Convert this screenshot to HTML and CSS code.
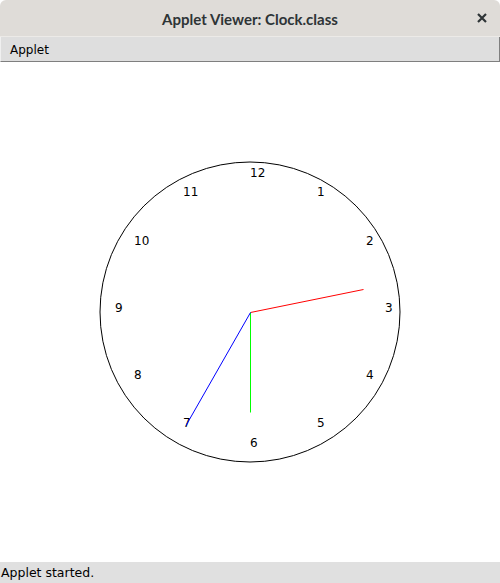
FILE: index.html
```html
<!DOCTYPE html>
<html>
<head>
<meta charset="utf-8">
<link rel="stylesheet" href="styles.css">
</head>
<body>
<div class="window">
  <div class="titlebar">
    <span class="title">Applet Viewer: Clock.class</span>
    <svg class="close" width="10" height="10" viewBox="0 0 10 10">
      <path d="M1 1 L9 9 M9 1 L1 9" stroke="#2e3436" stroke-width="2.2" fill="none"/>
    </svg>
  </div>
  <div class="menubar"><span class="menu">Applet</span></div>
  <div class="content">
    <svg class="clock" width="500" height="500" viewBox="0 0 500 500">
      <circle cx="250" cy="250" r="150" fill="none" stroke="#000" stroke-width="1"/>
      <g class="nums">
        <text x="250" y="115">12</text>
        <text x="317" y="133.5">1</text>
        <text x="366" y="183">2</text>
        <text x="385" y="249.5">3</text>
        <text x="366" y="317">4</text>
        <text x="317" y="365">5</text>
        <text x="250" y="384.5">6</text>
        <text x="183" y="365">7</text>
        <text x="134" y="317">8</text>
        <text x="115" y="249.5">9</text>
        <text x="134" y="183">10</text>
        <text x="183" y="133.5">11</text>
      </g>
      <line x1="250.5" y1="250.5" x2="363.5" y2="227.5" stroke="#ff0000" stroke-width="1"/>
      <line x1="250.5" y1="250.5" x2="250.5" y2="350.5" stroke="#00ff00" stroke-width="1"/>
      <line x1="250.5" y1="250.5" x2="186" y2="363.5" stroke="#0000ff" stroke-width="1"/>
    </svg>
  </div>
  <div class="status">Applet started.</div>
</div>
</body>
</html>
```
FILE: styles.css
```css
html, body {
  margin: 0;
  padding: 0;
  background: #ffffff;
}
.window {
  width: 500px;
  height: 583px;
  display: flex;
  flex-direction: column;
  overflow: hidden;
}
.titlebar {
  height: 36px;
  flex: none;
  background: #dfdcd8;
  border-bottom: 1px solid #eceae7;
  border-radius: 6px 6px 0 0;
  display: flex;
  align-items: center;
  justify-content: center;
  position: relative;
}
.title {
  font-family: "Lato", "DejaVu Sans", sans-serif;
  font-weight: bold;
  font-size: 15px;
  color: #2e3436;
  margin-top: 1px;
}
.close {
  position: absolute;
  right: 13px;
  top: 13px;
}
.menubar {
  height: 24px;
  flex: none;
  background: #dedede;
  border-bottom: 1px solid #7f7f7f;
  border-right: 1px solid #7f7f7f;
  border-left: 1px solid #f0f0f0;
  display: flex;
  align-items: center;
}
.menu {
  font-family: "DejaVu Sans", sans-serif;
  font-size: 12px;
  color: #000;
  padding-left: 9px;
  margin-top: 1px;
}
.content {
  flex: 1;
  background: #ffffff;
  position: relative;
}
.clock {
  display: block;
}
.nums text {
  font-family: "DejaVu Sans", sans-serif;
  font-size: 12px;
  fill: #000;
}
.status {
  height: 21px;
  flex: none;
  background: #e0e0e0;
  font-family: "DejaVu Sans", sans-serif;
  font-size: 12.5px;
  color: #000;
  line-height: 21px;
  padding-left: 1px;
}
```
